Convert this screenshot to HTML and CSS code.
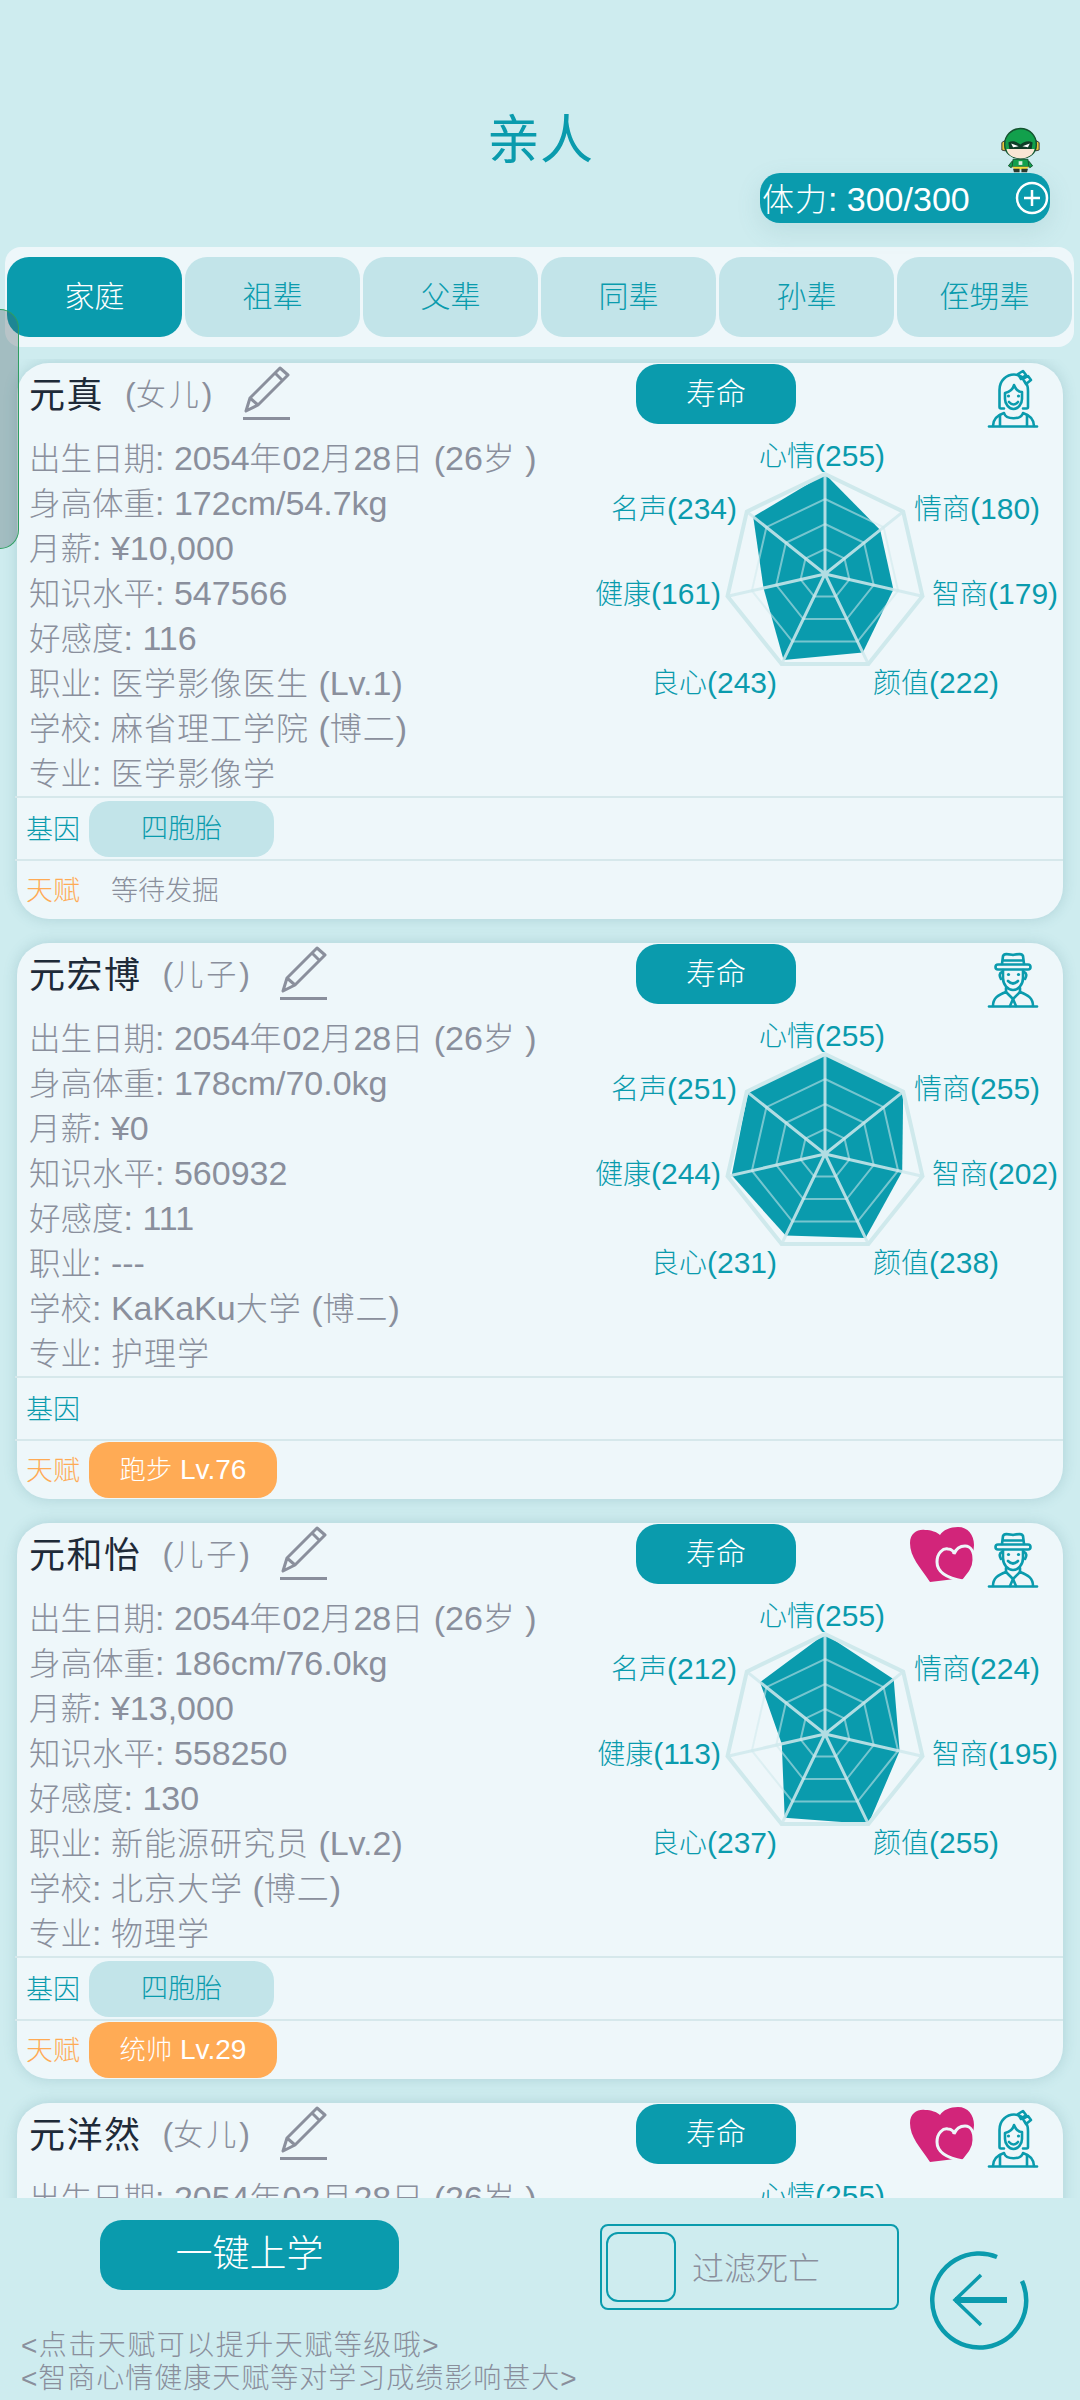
FILE: index.html
```html
<!DOCTYPE html>
<html>
<head>
    <meta charset="UTF-8">
    <title>亲人</title>
    <link rel="stylesheet" href="styles.css">
</head>
<body>
<svg class="defs" width="0" height="0">
    <defs>
        <symbol id="pencil" viewBox="0 0 48 54">
            <path d="M3 45 L7 32 L37 2 L45 9 L15 39 Z M7 32 L15 39 M32 7 L40 15" fill="none" stroke="#8a8f9c" stroke-width="3" stroke-linejoin="round"/>
            <path d="M0 52.500 H47" fill="none" stroke="#8a8f9c" stroke-width="3"/>
        </symbol>
        <symbol id="woman" viewBox="0 0 66 66">
            <g fill="none" stroke="#0a9bad" stroke-width="2.600" stroke-linecap="round" stroke-linejoin="round">
                <path d="M9 61.500 H57"/>
                <path d="M24 43.500 H21 Q19.500 43.500 19.500 42 V25 C19.500 15 27 9.500 34 9.500 C37 9.500 40 10.500 42 12 M46 18 C47.500 20 48 23 48 26 V42 Q48 43.500 46.500 43.500 H43"/>
                <path d="M25 28 C30 27 33 24 34 20 C36 25 39 27 42 27 V34 C42 39 38 44 33.500 44 C29 44 25 39 25 34 Z"/>
                <path d="M29 37 Q33.500 42 38 37"/>
                <path d="M13 61 C13 54 18 50 24 48 C26 55 41 55 43 48 C49 50 54 54 54 61"/>
                <path d="M20 50 V61 M47 50 V61"/>
                <path d="M38 9 L43 6 L46 10 L41 14 Z M43 14 L48 11 L51 15 L46 19 Z"/>
            </g>
            <circle cx="28.500" cy="31" r="1.600" fill="#0a9bad"/>
            <circle cx="38.500" cy="31" r="1.600" fill="#0a9bad"/>
        </symbol>
        <symbol id="man" viewBox="0 0 66 66">
            <g fill="none" stroke="#0a9bad" stroke-width="2.600" stroke-linecap="round" stroke-linejoin="round">
                <path d="M9 61.500 H57"/>
                <rect x="15.500" y="19.500" width="35" height="5" rx="2.500"/>
                <path d="M22 19 L23 11 C24 8 28 9 33 10 C38 9 42 8 43 11 L44 19 M23 15.500 H43"/>
                <path d="M23 25 V33 C23 40 28 45 33 45 C38 45 43 40 43 33 V25"/>
                <path d="M22 27 Q18 29 21 34 M44 27 Q48 29 45 34"/>
                <path d="M28 36 Q33 41 38 36"/>
                <path d="M13 61 C13 53 18 50 26 47 L33 54 L40 47 C48 50 53 53 53 61"/>
                <path d="M33 54 L30 61 M33 54 L36 61 M26 47 V43 M40 47 V43"/>
            </g>
            <circle cx="28.500" cy="29.500" r="1.600" fill="#0a9bad"/>
            <circle cx="38.500" cy="29.500" r="1.600" fill="#0a9bad"/>
        </symbol>
        <symbol id="hearts" viewBox="0 0 66 56">
            <path d="M20 55 C10 40 0 30 0 16 C0 6 8 2 15 3 C21 3 27 5 30 8 C33 3 40 0 48 0 C58 0 64 8 64 18 C64 30 55 40 45 52 Z" fill="#d2257a"/>
            <path d="M53 54 C42 52 27 48 27 35 C27 26 33 21 38 22 C42 22 44 25 44 27 C46 22 50 19 55 19 C61 19 64 25 64 33 C64 42 58 48 53 54 Z" fill="#d2257a" stroke="#eef7fa" stroke-width="3"/>
        </symbol>
        <symbol id="radar-grid" viewBox="-110 -110 220 220">
            <g fill="none" stroke="#cfe9ec">
                <polygon stroke-width="4" points="0,-100 78.200,-62.400 97.500,22.300 43.400,90.100 -43.400,90.100 -97.500,22.300 -78.200,-62.400"/>
                <g opacity=".55" stroke-width="2">
                    <polygon points="0,-75 58.600,-46.800 73.100,16.700 32.500,67.600 -32.500,67.600 -73.100,16.700 -58.600,-46.800"/>
                    <polygon points="0,-50 39.100,-31.200 48.700,11.100 21.700,45 -21.700,45 -48.700,11.100 -39.100,-31.200"/>
                    <polygon points="0,-25 19.500,-15.600 24.400,5.600 10.800,22.500 -10.800,22.500 -24.400,5.600 -19.500,-15.600"/>
                </g>
                <path opacity=".85" stroke-width="3" d="M0 0 L0 -100 M0 0 L78.200 -62.400 M0 0 L97.500 22.300 M0 0 L43.400 90.100 M0 0 L-43.400 90.100 M0 0 L-97.500 22.300 M0 0 L-78.200 -62.400"/>
            </g>
        </symbol>
    </defs>
</svg>

<header class="top">
    <h1 class="title">亲人</h1>
    <div class="stamina">
        <svg class="hero" viewBox="0 0 44 48" width="41" height="46">
            <path d="M5 14 L2 16 V24 L6 25 Z M39 14 L42 16 V24 L38 25 Z" fill="#e6c53a" stroke="#333" stroke-width="1"/>
            <path d="M22 1 C32 1 39 9 39 18 C39 27 32 33 22 33 C12 33 5 27 5 18 C5 9 12 1 22 1 Z" fill="#12a04c" stroke="#14532f" stroke-width="1.500"/>
            <path d="M7 23 H37 C36 29 30 33 22 33 C14 33 8 29 7 23 Z" fill="#fbe6d4"/>
            <path d="M9 16 C14 13 19 16 22 18 C25 16 30 13 35 16 L34 23 H10 Z" fill="#0f3d28"/>
            <path d="M12 17 L20 20 L14 21 Z M32 17 L24 20 L30 21 Z" fill="#fff"/>
            <path d="M13 36 L9 41 L12 43 L15 39 Z M31 36 L35 41 L32 43 L29 39 Z" fill="#12a04c" stroke="#14532f"/>
            <path d="M14 34 H30 L31 42 H13 Z" fill="#12a04c" stroke="#14532f"/>
            <rect x="20" y="36" width="4" height="4" fill="#d9f2e0"/>
            <path d="M13 42 H31 L28 45 H16 Z" fill="#f2dc3c"/>
            <path d="M14 44 H21 V48 H15 Z M23 44 H30 L29 48 H23 Z" fill="#2b3a2f"/>
        </svg>
        <span class="hp"><span class="c">体力</span>: 300/300</span>
        <svg class="plus" viewBox="0 0 34 34" width="34" height="34">
            <circle cx="17" cy="17" r="15" fill="none" stroke="#fff" stroke-width="2.500"/>
            <path d="M17 9 V25 M9 17 H25" stroke="#fff" stroke-width="2.500"/>
        </svg>
    </div>
</header>

<nav class="tabs">
    <a class="tab on">家庭</a>
    <a class="tab">祖辈</a>
    <a class="tab">父辈</a>
    <a class="tab">同辈</a>
    <a class="tab">孙辈</a>
    <a class="tab">侄甥辈</a>
</nav>

<div class="handle"></div>

<main class="list">
    <section class="card">
        <div class="head">
            <div class="who">
                <b class="name">元真</b><span class="rel">(<span class="c">女儿</span>)</span>
                <svg class="pencil"><use href="#pencil"/></svg>
            </div>
            <a class="life">寿命</a>
            <div class="marks"><svg class="person"><use href="#woman"/></svg></div>
        </div>
        <div class="main">
            <div class="info">
                <p><span class="k">出生日期</span>: 2054<span class="c">年</span>02<span class="c">月</span>28<span class="c">日</span> (26<span class="c">岁</span> )</p>
                <p><span class="k">身高体重</span>: 172cm/54.7kg</p>
                <p><span class="k">月薪</span>: ¥10,000</p>
                <p><span class="k">知识水平</span>: 547566</p>
                <p><span class="k">好感度</span>: 116</p>
                <p><span class="k">职业</span>: <span class="c">医学影像医生</span> (Lv.1)</p>
                <p><span class="k">学校</span>: <span class="c">麻省理工学院</span> (<span class="c">博二</span>)</p>
                <p><span class="k">专业</span>: <span class="c">医学影像学</span></p>
            </div>
            <div class="radar">
                <svg class="net" viewBox="-110 -110 220 220">
                    <polygon class="val" points="0,-100 55.200,-44 68.400,15.600 37.800,78.500 -41.400,85.900 -61.500,14 -71.800,-57.200"/>
                    <use href="#radar-grid" x="-110" y="-110" width="220" height="220"/>
                </svg>
                <span class="lb l0"><span class="c">心情</span>(255)</span>
                <span class="lb l1"><span class="c">情商</span>(180)</span>
                <span class="lb l2"><span class="c">智商</span>(179)</span>
                <span class="lb l3"><span class="c">颜值</span>(222)</span>
                <span class="lb l4"><span class="c">良心</span>(243)</span>
                <span class="lb l5"><span class="c">健康</span>(161)</span>
                <span class="lb l6"><span class="c">名声</span>(234)</span>
            </div>
        </div>
        <div class="strip gene">
            <span class="tag">基因</span><a class="chip">四胞胎</a>
        </div>
        <div class="strip talent">
            <span class="tag">天赋</span><span class="wait">等待发掘</span>
        </div>
    </section>

    <section class="card">
        <div class="head">
            <div class="who">
                <b class="name">元宏博</b><span class="rel">(<span class="c">儿子</span>)</span>
                <svg class="pencil"><use href="#pencil"/></svg>
            </div>
            <a class="life">寿命</a>
            <div class="marks"><svg class="person"><use href="#man"/></svg></div>
        </div>
        <div class="main">
            <div class="info">
                <p><span class="k">出生日期</span>: 2054<span class="c">年</span>02<span class="c">月</span>28<span class="c">日</span> (26<span class="c">岁</span> )</p>
                <p><span class="k">身高体重</span>: 178cm/70.0kg</p>
                <p><span class="k">月薪</span>: ¥0</p>
                <p><span class="k">知识水平</span>: 560932</p>
                <p><span class="k">好感度</span>: 111</p>
                <p><span class="k">职业</span>: ---</p>
                <p><span class="k">学校</span>: KaKaKu<span class="c">大学</span> (<span class="c">博二</span>)</p>
                <p><span class="k">专业</span>: <span class="c">护理学</span></p>
            </div>
            <div class="radar">
                <svg class="net" viewBox="-110 -110 220 220">
                    <polygon class="val" points="0,-100 78.200,-62.400 77.200,17.600 40.500,84.100 -39.300,81.600 -93.300,21.300 -76.900,-61.400"/>
                    <use href="#radar-grid" x="-110" y="-110" width="220" height="220"/>
                </svg>
                <span class="lb l0"><span class="c">心情</span>(255)</span>
                <span class="lb l1"><span class="c">情商</span>(255)</span>
                <span class="lb l2"><span class="c">智商</span>(202)</span>
                <span class="lb l3"><span class="c">颜值</span>(238)</span>
                <span class="lb l4"><span class="c">良心</span>(231)</span>
                <span class="lb l5"><span class="c">健康</span>(244)</span>
                <span class="lb l6"><span class="c">名声</span>(251)</span>
            </div>
        </div>
        <div class="strip gene">
            <span class="tag">基因</span>
        </div>
        <div class="strip talent">
            <span class="tag">天赋</span><a class="chip hot"><span class="c">跑步</span> Lv.76</a>
        </div>
    </section>

    <section class="card">
        <div class="head">
            <div class="who">
                <b class="name">元和怡</b><span class="rel">(<span class="c">儿子</span>)</span>
                <svg class="pencil"><use href="#pencil"/></svg>
            </div>
            <a class="life">寿命</a>
            <div class="marks"><svg class="hearts"><use href="#hearts"/></svg><svg class="person"><use href="#man"/></svg></div>
        </div>
        <div class="main">
            <div class="info">
                <p><span class="k">出生日期</span>: 2054<span class="c">年</span>02<span class="c">月</span>28<span class="c">日</span> (26<span class="c">岁</span> )</p>
                <p><span class="k">身高体重</span>: 186cm/76.0kg</p>
                <p><span class="k">月薪</span>: ¥13,000</p>
                <p><span class="k">知识水平</span>: 558250</p>
                <p><span class="k">好感度</span>: 130</p>
                <p><span class="k">职业</span>: <span class="c">新能源研究员</span> (Lv.2)</p>
                <p><span class="k">学校</span>: <span class="c">北京大学</span> (<span class="c">博二</span>)</p>
                <p><span class="k">专业</span>: <span class="c">物理学</span></p>
            </div>
            <div class="radar">
                <svg class="net" viewBox="-110 -110 220 220">
                    <polygon class="val" points="0,-100 68.700,-54.700 74.600,17 43.400,90.100 -40.300,83.700 -43.200,9.900 -65,-51.800"/>
                    <use href="#radar-grid" x="-110" y="-110" width="220" height="220"/>
                </svg>
                <span class="lb l0"><span class="c">心情</span>(255)</span>
                <span class="lb l1"><span class="c">情商</span>(224)</span>
                <span class="lb l2"><span class="c">智商</span>(195)</span>
                <span class="lb l3"><span class="c">颜值</span>(255)</span>
                <span class="lb l4"><span class="c">良心</span>(237)</span>
                <span class="lb l5"><span class="c">健康</span>(113)</span>
                <span class="lb l6"><span class="c">名声</span>(212)</span>
            </div>
        </div>
        <div class="strip gene">
            <span class="tag">基因</span><a class="chip">四胞胎</a>
        </div>
        <div class="strip talent">
            <span class="tag">天赋</span><a class="chip hot"><span class="c">统帅</span> Lv.29</a>
        </div>
    </section>

    <section class="card">
        <div class="head">
            <div class="who">
                <b class="name">元洋然</b><span class="rel">(<span class="c">女儿</span>)</span>
                <svg class="pencil"><use href="#pencil"/></svg>
            </div>
            <a class="life">寿命</a>
            <div class="marks"><svg class="hearts"><use href="#hearts"/></svg><svg class="person"><use href="#woman"/></svg></div>
        </div>
        <div class="main">
            <div class="info">
                <p><span class="k">出生日期</span>: 2054<span class="c">年</span>02<span class="c">月</span>28<span class="c">日</span> (26<span class="c">岁</span> )</p>
            </div>
            <div class="radar">
                <span class="lb l0"><span class="c">心情</span>(255)</span>
            </div>
        </div>
    </section>
</main>

<footer class="foot">
    <a class="one-key">一键上学</a>
    <label class="filter"><span class="check"></span><span class="filter-txt">过滤死亡</span></label>
    <svg class="back" viewBox="0 0 100 100" width="100" height="100">
        <path d="M68 7 A47 47 0 1 0 93 31" fill="none" stroke="#0a9bad" stroke-width="4.500"/>
        <path d="M52 25 L26 50 L52 75" fill="none" stroke="#0a9bad" stroke-width="3.500"/>
        <path d="M26 50 H78" fill="none" stroke="#0a9bad" stroke-width="6"/>
    </svg>
    <div class="hints">
        <p class="hint-a">&lt;点击天赋可以提升天赋等级哦&gt;</p>
        <p>&lt;智商心情健康天赋等对学习成绩影响甚大&gt;</p>
    </div>
</footer>
</body>
</html>
```

FILE: styles.css
```css
* {
    margin: 0;
    padding: 0;
    box-sizing: border-box;
}

html, body {
    width: 1080px;
    height: 2400px;
    overflow: hidden;
}

body {
    display: flex;
    flex-direction: column;
    position: relative;
    background: #ceecef;
    font-family: "Liberation Sans", "Noto Sans CJK SC", sans-serif;
    color: #8a8f9c;
}

.defs {
    position: absolute;
}

.c {
    font-size: .94em;
    font-weight: 300;
}

/* header */
.top {
    height: 247px;
    padding-top: 113px;
    flex: none;
}

.title {
    height: 60px;
    line-height: 55px;
    font-size: 53px;
    font-weight: 400;
    text-align: center;
    color: #0a9bad;
}

.stamina {
    position: relative;
    display: flex;
    align-items: center;
    width: 290px;
    height: 50px;
    margin-left: 760px;
    padding-left: 2px;
    padding-bottom: 3px;
    border-radius: 20px;
    background: #0a9bad;
    box-shadow: 0 8px 24px rgba(90, 140, 150, .15);
    color: #fff;
    font-size: 34px;
    white-space: nowrap;
}

.hp .c {
    letter-spacing: 1px;
}

.hero {
    position: absolute;
    right: 9px;
    top: -46px;
}

.plus {
    position: absolute;
    right: 1px;
    top: 8px;
}

/* tabs */
.tabs {
    display: flex;
    flex: none;
    gap: 3px;
    width: 1069px;
    height: 100px;
    margin-left: 5px;
    padding: 10px 2px;
    border-radius: 16px;
    background: #eef7fa;
}

.tab {
    flex: 1;
    border-radius: 22px;
    background: #c2e4e9;
    color: #0a9bad;
    font-size: 30px;
    font-weight: 300;
    line-height: 80px;
    text-align: center;
}

.tab.on {
    background: #0a9bad;
    color: #fff;
}

.handle {
    position: absolute;
    left: 0;
    top: 309px;
    width: 19px;
    height: 240px;
    border: 1px solid #2f9e62;
    border-left: 0;
    border-radius: 0 20px 20px 0;
    background: rgba(70, 90, 95, .32);
}

/* card list */
.list {
    flex: none;
    height: 1839px;
    margin-top: 12px;
    padding: 4px 17px 0;
    overflow: hidden;
}

.card {
    height: 556px;
    margin-bottom: 24px;
    border-radius: 32px;
    background: #eef7fa;
    box-shadow: 0 0 14px rgba(60, 120, 130, .22);
}

.head {
    display: grid;
    grid-template-columns: 619px 160px 1fr;
    height: 73px;
}

.who {
    display: flex;
    align-items: center;
    padding-left: 12px;
    height: 58px;
}

.name {
    font-size: 36px;
    font-weight: 400;
    letter-spacing: 1.500px;
    color: #1e2a38;
}

.rel {
    margin-left: 21px;
    font-size: 32px;
}

.rel .c {
    letter-spacing: 3px;
}

.pencil {
    width: 48px;
    height: 54px;
    margin-left: 30px;
    margin-top: 2px;
}

.life {
    height: 60px;
    margin-top: 1px;
    border-radius: 22px;
    background: #0a9bad;
    color: #fff;
    font-size: 30px;
    font-weight: 300;
    line-height: 60px;
    text-align: center;
}

.marks {
    display: flex;
    justify-content: flex-end;
    align-items: flex-start;
    gap: 4px;
    padding-top: 2px;
    padding-right: 17px;
}

.person {
    width: 66px;
    height: 66px;
}

.hearts {
    width: 66px;
    height: 56px;
    margin-top: 2px;
}

.main {
    display: flex;
    height: 360px;
}

.info {
    width: 546px;
    padding-left: 12px;
    font-size: 34px;
    white-space: nowrap;
}

.info p {
    height: 45px;
    line-height: 45px;
}

.k {
    font-size: 31.500px;
    font-weight: 300;
}

.info .c {
    font-size: 32px;
    letter-spacing: 1px;
}

.radar {
    position: relative;
    width: 500px;
    height: 360px;
    margin-top: 1px;
    color: #0a9bad;
    font-size: 30px;
}

.net {
    position: absolute;
    left: 152px;
    top: 27px;
    width: 220px;
    height: 220px;
}

.val {
    fill: #0a9bad;
}

.lb {
    position: absolute;
    height: 40px;
    line-height: 40px;
    white-space: nowrap;
}

.lb .c {
    font-size: 28px;
}

.l0 { left: 196px; top: -1px; }
.l1 { left: 351px; top: 52px; }
.l2 { left: 369px; top: 137px; }
.l3 { left: 310px; top: 226px; }
.l4 { right: 286px; top: 226px; }
.l5 { right: 342px; top: 137px; }
.l6 { right: 326px; top: 52px; }

.strip {
    display: flex;
    align-items: center;
    margin-left: -2px;
    padding-left: 11px;
    border-top: 2px solid #d6e8eb;
    font-size: 27px;
    font-weight: 300;
}

.tag {
    margin-top: -3px;
}

.gene {
    height: 63px;
    color: #0a9bad;
}

.talent {
    height: 60px;
    color: #ffab55;
}

.chip {
    width: 185px;
    height: 56px;
    margin-left: 9px;
    border-radius: 20px;
    background: #c2e4e9;
    color: #0a9bad;
    line-height: 56px;
    text-align: center;
}

.hot {
    width: 188px;
    margin-top: -1px;
    background: #ffab55;
    color: #fff;
    font-size: 28px;
    font-weight: 400;
}

.wait {
    margin-left: 31px;
    margin-top: -3px;
    color: #8a8f9c;
}

/* footer */
.foot {
    display: grid;
    flex: 1;
    grid-template-columns: 600px 329px 151px;
    grid-template-rows: 112px 1fr;
}

.one-key {
    width: 299px;
    height: 70px;
    margin: 22px 0 0 100px;
    border-radius: 22px;
    background: #0a9bad;
    color: #fff;
    font-size: 37px;
    font-weight: 300;
    line-height: 70px;
    text-align: center;
}

.filter {
    display: flex;
    align-items: center;
    width: 299px;
    height: 86px;
    margin-top: 26px;
    padding-left: 4px;
    border: 2px solid #0a9bad;
    border-radius: 8px;
}

.check {
    width: 70px;
    height: 70px;
    border: 2.500px solid #0a9bad;
    border-radius: 12px;
}

.filter-txt {
    margin-left: 16px;
    margin-top: -3px;
    font-size: 32px;
    font-weight: 300;
}

.back {
    grid-column: 3;
    grid-row: 1 / 3;
    margin-top: 52px;
}

.hints {
    grid-column: 1 / 3;
    grid-row: 2;
    padding: 19px 0 0 21px;
    font-size: 28px;
    font-weight: 300;
    letter-spacing: 1px;
    line-height: 33px;
}

.hint-a {
    letter-spacing: 1.500px;
}
```
